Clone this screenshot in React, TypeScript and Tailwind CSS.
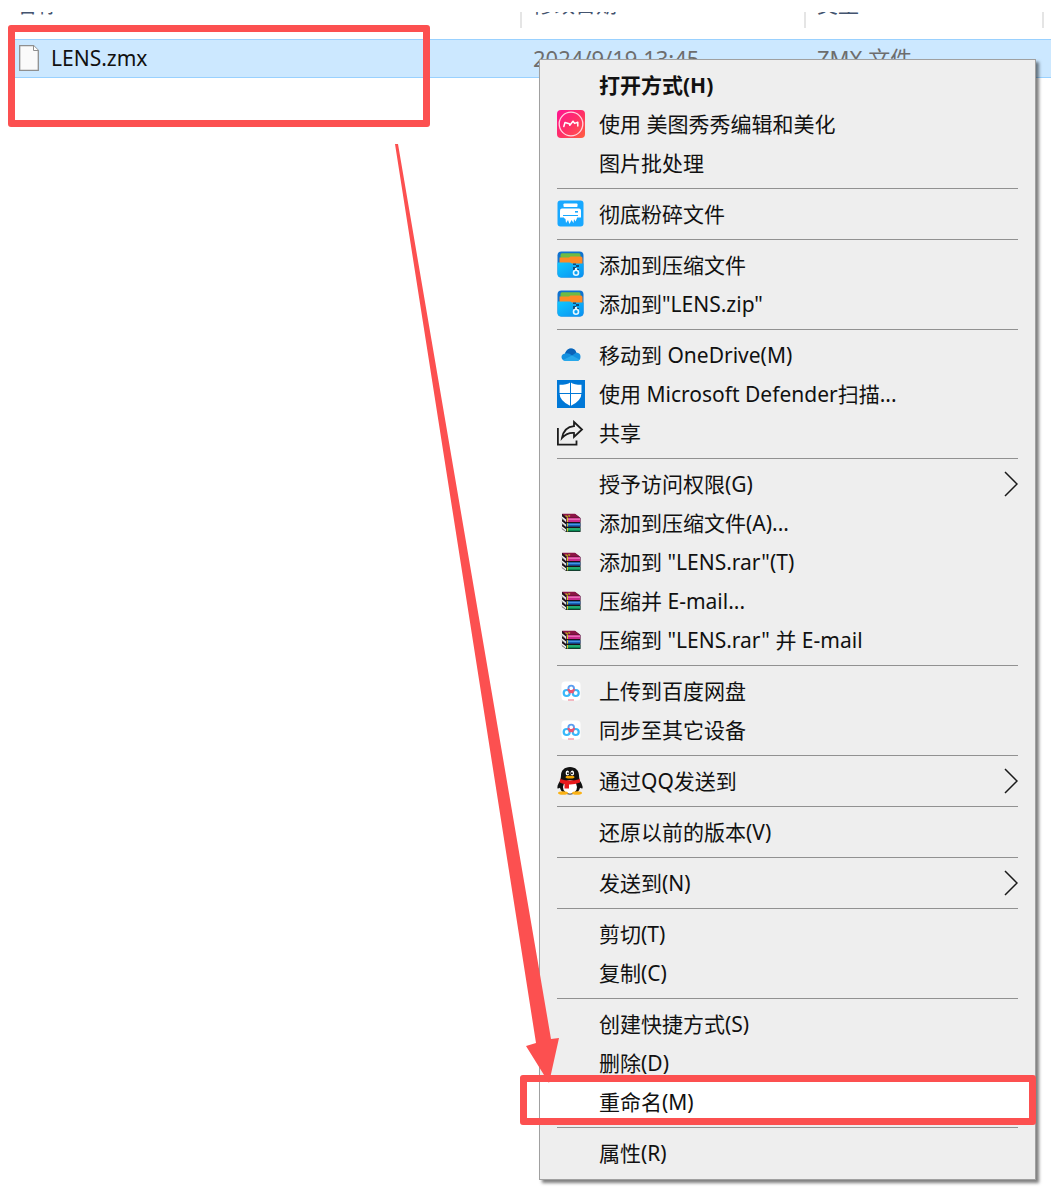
import { Fragment } from "react";
import type { ReactNode } from "react";
import clsx from "clsx";

function FileIcon() {
  return (
    <svg width="20" height="26" viewBox="0 0 20 26" className="shrink-0">
      <path d="M0.7 0.7H14.5L19.3 5.5V25.3H0.7Z" fill="#fafafa" stroke="#8f8f8f" strokeWidth="1.3" />
      <path d="M14.5 0.7V5.5H19.3" fill="#fff" stroke="#8f8f8f" strokeWidth="1" />
    </svg>
  );
}

function MeituIcon() {
  return (
    <svg width="28" height="28" viewBox="0 0 28 28">
      <defs>
        <linearGradient id="meitu" x1="0" y1="0" x2="1" y2="1">
          <stop offset="0" stopColor="#ff1493" />
          <stop offset="0.5" stopColor="#ff2f68" />
          <stop offset="1" stopColor="#ff6040" />
        </linearGradient>
      </defs>
      <rect width="28" height="28" rx="4" fill="url(#meitu)" />
      <circle cx="14" cy="14" r="11.8" fill="none" stroke="#ffd5e0" strokeWidth="1.3" />
      <path
        d="M6.8 16.5L8 12.5L12.3 13.8L12.8 15.3L16 11.2L17.6 13.4L20.8 12.2V16"
        fill="none" stroke="#fff" strokeWidth="1.5" strokeLinecap="round" strokeLinejoin="round"
      />
    </svg>
  );
}

function ShredIcon() {
  return (
    <svg width="28" height="28" viewBox="0 0 28 28">
      <rect x="0.5" y="0.5" width="26" height="26" rx="3" fill="#18a8ff" />
      <rect x="6.5" y="3.5" width="14" height="3.5" rx="0.8" fill="#fff" />
      <path d="M5 8.5H22Q24 8.5 24 10.5V17.5H3V10.5Q3 8.5 5 8.5Z" fill="#fff" />
      <path d="M6 15.5H21" stroke="#18a8ff" strokeWidth="1" />
      <path d="M7 16H20V18L18.5 21.5L17 19L16.5 23L14.5 20L12.5 24L11 20L9 23L8.5 19L7 18Z" fill="#fff" />
      <rect x="18" y="11" width="3" height="1.6" fill="#18a8ff" />
    </svg>
  );
}

function ZipIcon() {
  return (
    <svg width="28" height="28" viewBox="0 0 28 28">
      <defs>
        <linearGradient id="zip" x1="0" y1="0" x2="1" y2="1">
          <stop offset="0" stopColor="#10c8ff" />
          <stop offset="1" stopColor="#0a8ff0" />
        </linearGradient>
      </defs>
      <rect x="0.5" y="0.5" width="26" height="26" rx="4" fill="#0f72d0" />
      <path d="M3.5 4Q3.5 2.2 5 2.2H22Q23.5 2.2 23.5 4V8H3.5Z" fill="#6fbb44" />
      <path d="M2.5 6.5H12L13.5 5.5H24Q25.5 5.5 25.5 7.5V13H2.5Z" fill="#ff8a26" />
      <path d="M0.5 11.5H12Q14 11.5 15 12.5H26.5V22.5Q26.5 26.5 22.5 26.5H4.5Q0.5 26.5 0.5 22.5Z" fill="url(#zip)" />
      <path d="M16 12.5H19V14H22V16H19V18H22V19H16V16H19V14H16Z" fill="#164a78" />
      <circle cx="19" cy="21.8" r="2.5" fill="none" stroke="#e6f7ff" strokeWidth="1.6" />
      <path d="M19 17V20" stroke="#e6f7ff" strokeWidth="2" />
    </svg>
  );
}

function OneDriveIcon() {
  return (
    <svg width="20" height="14" viewBox="0 0 20 14">
      <path d="M4 12.5Q0.5 12 0.5 9Q0.5 6 4 5.5Q6 0.5 10 0.5Q14 0.5 15.3 4.5Q19.5 5 19.5 8.8Q19.5 12.8 16 13H4Z" fill="#1490df" />
      <path d="M4 5.5Q6 0.5 10 0.5Q14 0.5 15.3 4.5L11 7.5Q8 4.6 4 5.5Z" fill="#0a62b8" />
      <path d="M2 12L11 7.5L18.5 11.5Q17.5 13 16 13H4Q2.7 13 2 12Z" fill="#28a8ea" />
    </svg>
  );
}

function DefenderIcon() {
  return (
    <svg width="28" height="28" viewBox="0 0 28 28">
      <rect width="28" height="28" fill="#0078d7" />
      <path d="M13.5 2.2Q17 4.8 24.5 4.8V13Q24.5 21 13.5 26Q2.5 21 2.5 13V4.8Q10 4.8 13.5 2.2Z" fill="#fff" />
      <path d="M13.5 2V26M2 13.5H25" stroke="#0078d7" strokeWidth="1" />
    </svg>
  );
}

function ShareIcon() {
  return (
    <svg width="28" height="26" viewBox="0 0 28 26" fill="none" stroke="#1c1c1c" strokeWidth="1.8">
      <path d="M0.9 8V24.6H19.5V20.5" />
      <path d="M17 2L25 9.5L17 17V13Q10 12.5 5 18Q7 7 17 6.2Z" />
    </svg>
  );
}

function RarIcon() {
  return (
    <svg width="20" height="20" viewBox="0 0 20 20">
      <path d="M1 1H14L19.5 5V19H5L1 16Z" fill="#1d1018" />
      <path d="M1 0.8H14L19 4.8H5.5Z" fill="#8c1446" />
      <path d="M4.5 2.5L7 4.4M7.5 2.2L9 3.4" stroke="#b5a522" strokeWidth="1.4" />
      <path d="M5.5 5H19.3V9H5.5Z" fill="#c92a8c" />
      <path d="M6 6.2H19" stroke="#f58ac8" strokeWidth="1" />
      <path d="M5.5 10.2H19.3V13.6H5.5Z" fill="#1760b8" />
      <path d="M6 11.3H19" stroke="#4ea6ee" strokeWidth="1" />
      <path d="M5.5 15H19.3V18.4H5.5Z" fill="#078a54" />
      <path d="M6 16H19" stroke="#41c98c" strokeWidth="1" />
      <path d="M0.5 3L5 6.5V9L0.5 5.5ZM0.5 8L5 11.5V13.8L0.5 10.5ZM0.5 13L5 16.3V18.6L0.5 15.5Z" fill="#f4f4f4" />
      <path d="M0.5 5L4.5 8.2M0.5 10L4.5 13M0.5 15L4.5 18" stroke="#888" strokeWidth="0.8" />
      <path d="M6.5 5V9M6.5 10.2V13.6M6.5 15V18.4" stroke="#d8c22e" strokeWidth="1.1" />
    </svg>
  );
}

function BaiduIcon() {
  return (
    <svg width="20" height="20" viewBox="0 0 20 20" fill="none">
      <rect x="0.5" y="0.5" width="19" height="19" rx="3.5" fill="#fff" />
      <circle cx="10.2" cy="7.4" r="2.8" stroke="#5b9df0" strokeWidth="1.9" />
      <circle cx="5.7" cy="12" r="3" stroke="#38b8fa" strokeWidth="2.2" />
      <circle cx="14.7" cy="12" r="3" stroke="#38b8fa" strokeWidth="2.2" />
      <path d="M7.2 8Q7.6 10.2 10.2 10.4Q12.8 10.2 13.2 8M8.2 12L10.2 10.2L12.2 12" stroke="#ee5570" strokeWidth="2" />
      <path d="M7 19H13" stroke="#f08c9c" strokeWidth="1.2" />
    </svg>
  );
}

function QQIcon() {
  return (
    <svg width="28" height="28" viewBox="0 0 28 28">
      <path d="M4.5 12Q-0.5 18 0.6 21.5Q2 22 4.5 19Z" fill="#111" />
      <path d="M21.5 12Q26.5 18 25.4 21.5Q24 22 21.5 19Z" fill="#111" />
      <path d="M13 0C7.5 0 4 3.5 4 8.5C4 11 2.6 14 2.6 18C2.6 24 7 27.5 13 27.5S23.4 24 23.4 18C23.4 14 22 11 22 8.5C22 3.5 18.5 0 13 0Z" fill="#111" />
      <ellipse cx="13" cy="20" rx="7" ry="6.8" fill="#fff" />
      <ellipse cx="10.4" cy="6" rx="1.8" ry="2.5" fill="#fff" />
      <ellipse cx="15.3" cy="6" rx="1.8" ry="2.5" fill="#fff" />
      <circle cx="10.9" cy="6.3" r="1" fill="#111" />
      <circle cx="14.9" cy="6.3" r="1" fill="#111" />
      <ellipse cx="13" cy="10.2" rx="4.5" ry="1.4" fill="#f5a800" />
      <path d="M3 12Q13 15 23 12V15.5Q17 17.8 12 17.5V21.5H7.5V17Q5 16.5 2.8 15.5Z" fill="#e8191c" />
      <ellipse cx="6" cy="26" rx="5" ry="1.8" fill="#fbb216" />
      <ellipse cx="20" cy="26" rx="5" ry="1.8" fill="#fbb216" />
    </svg>
  );
}

function SubmenuArrow() {
  return (
    <svg width="14" height="26" viewBox="0 0 14 26" className="ml-auto">
      <path d="M1 1L13 13L1 25" fill="none" stroke="#1a1a1a" strokeWidth="1.5" />
    </svg>
  );
}

type Item = { label: string; icon?: ReactNode; submenu?: boolean; bold?: boolean; marked?: boolean };

const GROUPS: Item[][] = [
  [
    { label: "打开方式(H)", bold: true },
    { label: "使用 美图秀秀编辑和美化", icon: <MeituIcon /> },
    { label: "图片批处理" },
  ],
  [{ label: "彻底粉碎文件", icon: <ShredIcon /> }],
  [
    { label: "添加到压缩文件", icon: <ZipIcon /> },
    { label: '添加到"LENS.zip"', icon: <ZipIcon /> },
  ],
  [
    { label: "移动到 OneDrive(M)", icon: <OneDriveIcon /> },
    { label: "使用 Microsoft Defender扫描...", icon: <DefenderIcon /> },
    { label: "共享", icon: <ShareIcon /> },
  ],
  [
    { label: "授予访问权限(G)", submenu: true },
    { label: "添加到压缩文件(A)...", icon: <RarIcon /> },
    { label: '添加到 "LENS.rar"(T)', icon: <RarIcon /> },
    { label: "压缩并 E-mail...", icon: <RarIcon /> },
    { label: '压缩到 "LENS.rar" 并 E-mail', icon: <RarIcon /> },
  ],
  [
    { label: "上传到百度网盘", icon: <BaiduIcon /> },
    { label: "同步至其它设备", icon: <BaiduIcon /> },
  ],
  [{ label: "通过QQ发送到", icon: <QQIcon />, submenu: true }],
  [{ label: "还原以前的版本(V)" }],
  [{ label: "发送到(N)", submenu: true }],
  [{ label: "剪切(T)" }, { label: "复制(C)" }],
  [{ label: "创建快捷方式(S)" }, { label: "删除(D)" }, { label: "重命名(M)", marked: true }],
  [{ label: "属性(R)" }],
];

function MenuItem({ item }: { item: Item }) {
  return (
    <div className={clsx("relative", item.marked && "bg-white")}>
      <button
        type="button"
        role="menuitem"
        className={clsx(
          "flex h-[39px] w-full items-center px-[17px] text-left whitespace-nowrap",
          item.bold && "font-bold",
        )}
      >
        <span className="mr-[14px] flex w-7 shrink-0 justify-center">{item.icon}</span>
        {item.label}
        {item.submenu && <SubmenuArrow />}
      </button>
      {item.marked && (
        <div className="pointer-events-none absolute -top-[7px] -right-px -bottom-1 -left-5 rounded-[3px] border-[7px] border-[#fc5050]" />
      )}
    </div>
  );
}

function ContextMenu() {
  return (
    <div
      role="menu"
      className="relative -mt-[19px] ml-[539px] w-[497px] border border-[#a0a0a0] bg-[#eeeeee] pt-[5px] pb-[7px] shadow-[3px_3px_3px_rgba(0,0,0,0.5)]"
    >
      {GROUPS.map((group, i) => (
        <Fragment key={i}>
          {i > 0 && (
            <div role="separator" className="flex h-3 items-center px-[17px]">
              <div className="h-px w-full bg-[#919191]" />
            </div>
          )}
          {group.map((item) => (
            <MenuItem key={item.label} item={item} />
          ))}
        </Fragment>
      ))}
    </div>
  );
}

function HeaderCell({ children, className }: { children: ReactNode; className: string }) {
  return (
    <th className="p-0 text-left font-normal">
      <div className={clsx("h-4 overflow-hidden border-r-2 border-[#e5e5e5]", className)}>
        <div className="-mt-5 leading-6 text-[#44546f]">{children}</div>
      </div>
    </th>
  );
}

export default function App() {
  return (
    <main className="relative min-h-screen overflow-hidden bg-white pt-3 pb-[10px] font-['Noto_Sans','Noto_Sans_CJK_SC',sans-serif] text-[21px] leading-7 text-[#111]">
      <table className="w-full table-fixed border-collapse">
        <colgroup>
          <col className="w-[522px]" />
          <col className="w-[284px]" />
          <col />
          <col className="w-4" />
        </colgroup>
        <thead>
          <tr>
            <HeaderCell className="pl-4">名称</HeaderCell>
            <HeaderCell className="pl-[11px]">修改日期</HeaderCell>
            <HeaderCell className="pl-[11px]">类型</HeaderCell>
            <td />
          </tr>
          <tr className="h-[11px]" />
        </thead>
        <tbody>
          <tr>
            <td className="p-0 pl-[14px]">
              <div className="flex h-[39px] items-center gap-3 border-y border-[#99d1ff] bg-[#cce8ff] pb-px pl-[5px]">
                <FileIcon />
                LENS.zmx
              </div>
            </td>
            <td className="p-0 text-[22px] text-[#6d6d6d]">
              <div className="flex h-[39px] items-center border-y border-[#99d1ff] bg-[#cce8ff] pb-px pl-[11px]">
                2024/9/19 13:45
              </div>
            </td>
            <td className="p-0 text-[22px] text-[#6d6d6d]">
              <div className="flex h-[39px] items-center border-y border-[#99d1ff] bg-[#cce8ff] pb-px pl-[11px]">
                ZMX 文件
              </div>
            </td>
            <td className="p-0 pr-[9px]">
              <div className="h-[39px] border-y border-[#99d1ff] bg-[#cce8ff]" />
            </td>
          </tr>
        </tbody>
      </table>

      <ContextMenu />

      {/* hand-drawn marks over the window */}
      <div className="pointer-events-none absolute top-[25px] left-2 h-[102px] w-[422px] rounded-[3px] border-[7px] border-[#fc5050]" />
      <svg width="180" height="950" viewBox="0 0 180 950" className="pointer-events-none absolute top-[140px] left-[390px]">
        <path d="M5 4L8 4L161 899L169 898L159 943L136 906L146 903Z" fill="#fc5050" />
      </svg>
    </main>
  );
}
